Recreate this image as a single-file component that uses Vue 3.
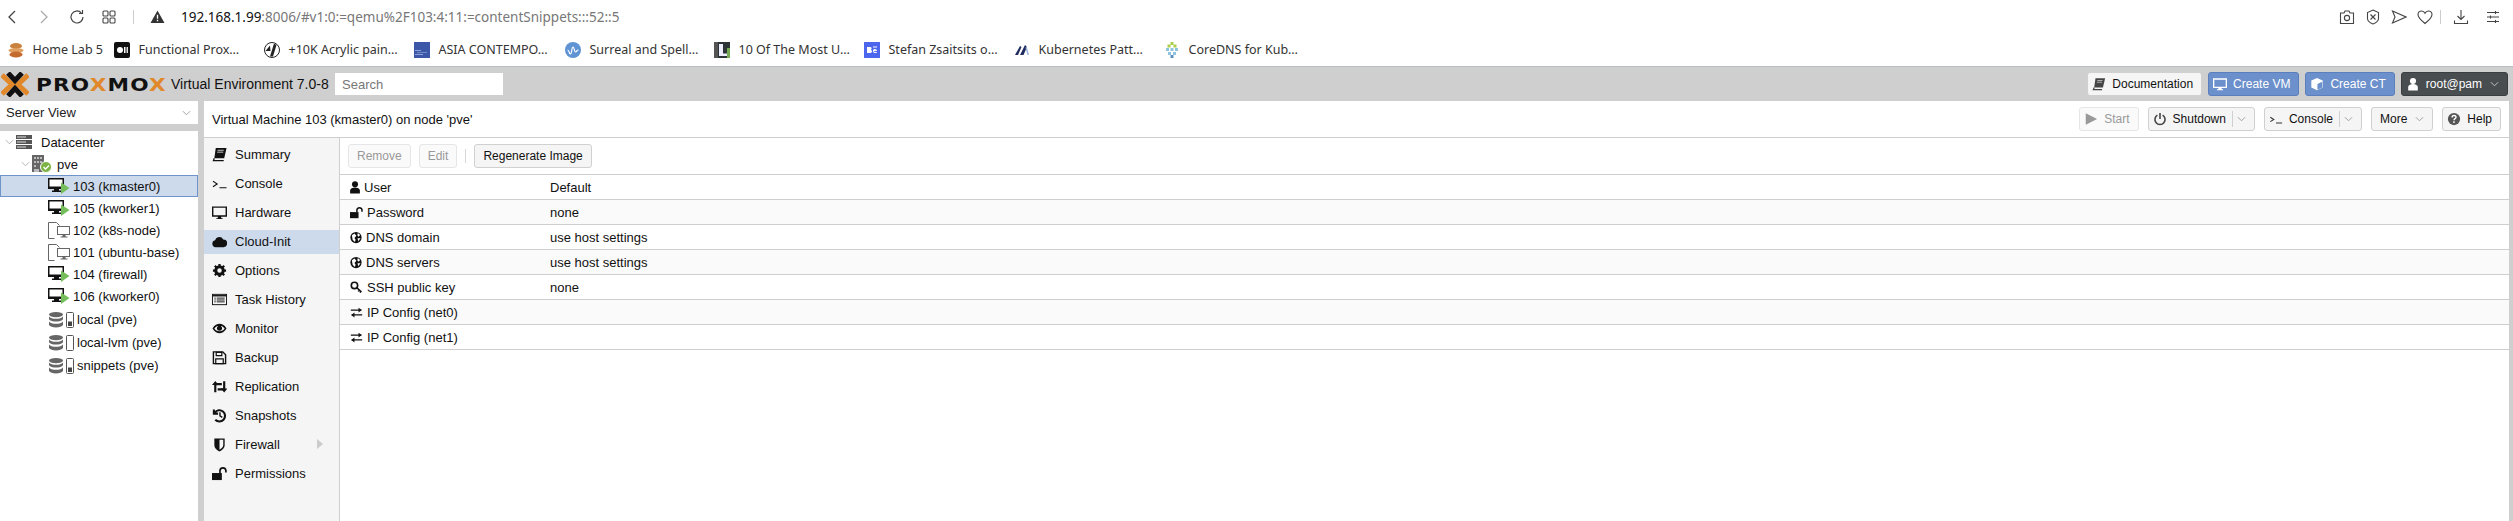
<template>
  <div class="page">
    <div class="browser-bar">
      <div class="nav-icons">
        <svg class="chrome-ico" viewBox="0 0 16 16"><path d="M11 2 5 8l6 6" fill="none" stroke="#444" stroke-width="1.300" /></svg>
        <svg class="chrome-ico" viewBox="0 0 16 16"><path d="m5 2 6 6-6 6" fill="none" stroke="#aaa" stroke-width="1.300" /></svg>
        <svg class="chrome-ico" viewBox="0 0 16 16"><path d="M14 8a6 6 0 1 1-1.800-4.300M13.500 1v3.500H10" fill="none" stroke="#444" stroke-width="1.200" /></svg>
        <svg class="chrome-ico" viewBox="0 0 16 16"><g fill="none" stroke="#444" stroke-width="1.100"><rect x="2" y="2" width="5" height="5" rx="1" /><rect x="9" y="2" width="5" height="5" rx="1" /><rect x="2" y="9" width="5" height="5" rx="1" /><rect x="9" y="9" width="5" height="5" rx="1" /></g></svg>
        <span class="bar-sep"></span>
        <svg class="warn-ico" viewBox="0 0 16 16"><path d="M8 1.500 15.500 15H.5Z" fill="#333" /><path d="M8 6v4.500M8 11.500v1.500" stroke="#fff" stroke-width="1.400" /></svg>
      </div>
      <div class="address"><b>192.168.1.99</b>:8006/#v1:0:=qemu%2F103:4:11:=contentSnippets:::52::5</div>
      <div class="right-icons">
        <svg class="chrome-ico" viewBox="0 0 16 16"><g fill="none" stroke="#444" stroke-width="1.100"><path d="M1.500 4h3.500l1-2h4l1 2h3.500v10.500h-13Z" /><circle cx="8" cy="9" r="2.600" /></g></svg>
        <svg class="chrome-ico" viewBox="0 0 16 16"><g fill="none" stroke="#444" stroke-width="1.100"><path d="M8 1 13.500 3.500v6c0 2.500-3 4.500-5.500 5.500-2.500-1-5.500-3-5.500-5.500v-6Z" /><path d="m5.500 5.500 5 5M10.500 5.500l-5 5" /></g></svg>
        <svg class="chrome-ico" viewBox="0 0 16 16"><path d="M1.500 2 15 8 1.500 14 4 8Z" fill="none" stroke="#444" stroke-width="1.100" /></svg>
        <svg class="chrome-ico" viewBox="0 0 16 16"><path d="M8 14.500C3 10.500 1 7.800 1 5.500 1 3.500 2.700 2 4.600 2c1.400 0 2.700.8 3.400 2.200C8.700 2.800 10 2 11.400 2 13.300 2 15 3.500 15 5.500c0 2.300-2 5-7 9Z" fill="none" stroke="#444" stroke-width="1.100" /></svg>
        <span class="bar-sep"></span>
        <svg class="chrome-ico dl" viewBox="0 0 16 16"><path d="M8 1v9.500M4.500 7 8 10.500 11.500 7M1.500 11.500v3h13v-3" fill="none" stroke="#444" stroke-width="1.100" /></svg>
        <svg class="chrome-ico sl" viewBox="0 0 16 16"><path d="M2 3.500h12M2 8h12M2 12.500h12M10.500 2v3M5.500 6.500v3M10.500 11v3" fill="none" stroke="#444" stroke-width="1.100" /></svg>
      </div>
    </div>

    <div class="bookmarks">
      <div v-for="b in bookmarks" :key="b.label" class="bookmark" :style="{ width: b.width + 'px' }">
        <svg class="fav" viewBox="0 0 16 16" v-html="b.icon"></svg>
        <span>{{ b.label }}</span>
      </div>
    </div>

    <header class="pve-header">
      <div class="logo">
        <svg class="logo-x" viewBox="0 0 28 25">
          <path d="M1 3l10 9.500L1 22M27 3 17 12.500 27 22" fill="none" stroke="#e0882a" stroke-width="5" />
          <path d="M7 1l7 7.500L21 1M7 24l7-7.500 7 7.500" fill="none" stroke="#111" stroke-width="5" />
        </svg>
        <span class="logo-word">PRO<i>X</i>MO<i>X</i></span>
      </div>
      <span class="version">Virtual Environment 7.0-8</span>
      <input class="search" placeholder="Search" />
      <div class="header-actions">
        <button class="btn">
          <svg class="ico" viewBox="0 0 16 16"><path d="M4 1.500h11L12.500 12H2.500Z" fill="#444" /><path d="M2.500 12 1.500 14.500h10" fill="none" stroke="#444" stroke-width="1.300" /><path d="M6 4h6M5.500 6h6" stroke="#ddd" stroke-width=".8" /></svg>
          Documentation
        </button>
        <button class="btn blue">
          <svg class="ico" viewBox="0 0 16 16"><path d="M0 1.500h16v11H9.800v1.500H11.500v1h-7v-1h1.700v-1.500H0Zm1.500 1.500v8h13V3Z" fill="#fff" /></svg>
          Create VM
        </button>
        <button class="btn blue">
          <svg class="ico" viewBox="0 0 16 16"><path d="M8 1 14.500 4v8L8 15 1.500 12V4Z" fill="#fff" /><path d="M8.500 8v6.500L14 12V5.500Z" fill="#6c90cb" /></svg>
          Create CT
        </button>
        <button class="btn dark">
          <svg class="ico" viewBox="0 0 16 16"><circle cx="8" cy="4.500" r="3.500" fill="#fff" /><path d="M2.500 15.500v-4C2.500 9.500 5 8 8 8s5.500 1.500 5.500 3.500v4Z" fill="#fff" /></svg>
          root@pam
          <svg class="caret" viewBox="0 0 10 6"><path d="m1 1 4 4 4-4" fill="none" stroke="#ccc" /></svg>
        </button>
      </div>
    </header>

    <div class="workspace">
      <aside class="left">
        <div class="view-select">
          <span>Server View</span>
          <svg class="caret" viewBox="0 0 10 6"><path d="m1 1 4 4 4-4" fill="none" stroke="#999" /></svg>
        </div>
        <div class="tree">
          <div v-for="n in tree" :key="n.label" class="tree-row" :class="[n.kind, { selected: n.selected }]">
            <svg v-if="n.twisty" class="twisty" viewBox="0 0 10 6"><path d="m1 1 4 4 4-4" fill="none" stroke="#aaa" /></svg>

            <svg v-if="n.kind === 'dc'" class="tree-ico" viewBox="0 0 16 14">
              <g fill="#555"><rect x="0" y="0" width="16" height="4" /><rect x="0" y="5" width="16" height="4" /><rect x="0" y="10" width="16" height="4" /></g>
              <g fill="#ddd"><rect x="1" y="1.500" width="9" height="1" /><rect x="1" y="6.500" width="9" height="1" /><rect x="1" y="11.500" width="9" height="1" /></g>
            </svg>
            <svg v-else-if="n.kind === 'node'" class="tree-ico node-ico" viewBox="0 0 20 18">
              <path d="M0 0h12v17H0Z" fill="#666" />
              <g fill="#bbb"><rect x="2" y="2" width="2" height="2" /><rect x="5" y="2" width="2" height="2" /><rect x="8" y="2" width="2" height="2" /><rect x="2" y="6" width="2" height="2" /><rect x="5" y="6" width="2" height="2" /><rect x="8" y="6" width="2" height="2" /><rect x="2" y="10" width="2" height="2" /><rect x="2" y="14" width="5" height="3" /></g>
              <circle cx="14" cy="12" r="5.500" fill="#7cb342" stroke="#fff" />
              <path d="m11.500 12 2 2 3.500-3.500" fill="none" stroke="#fff" stroke-width="1.300" />
            </svg>
            <svg v-else-if="n.kind === 'vm'" class="tree-ico vm-ico" viewBox="0 0 22 17">
              <path d="M0 0h16v11h-5v1.500h2V14H4v-1.500h2V11H0Z" fill="#111" />
              <rect x="1.500" y="1.500" width="13" height="7" fill="#fff" />
              <path d="M13 4.500 21.500 10 13 16Z" fill="#75bd5a" />
            </svg>
            <svg v-else-if="n.kind === 'tpl'" class="tree-ico vm-ico" viewBox="0 0 22 17">
              <path d="M.5 16.500V.5h8l3 3M.5 16.500h6" fill="none" stroke="#555" stroke-width="0.900" />
              <path d="M9 4h13v9h-4.500v1.500h2v1h-7v-1h2V13H9Z" fill="#666" />
              <rect x="10" y="5" width="11" height="7" fill="#fff" />
            </svg>
            <svg v-else class="tree-ico store-ico" viewBox="0 0 25 16">
              <g fill="#666"><ellipse cx="7" cy="2.600" rx="7" ry="2.600" /><path d="M0 4.500c1 1.600 3.800 2.300 7 2.300s6-.7 7-2.300v2.800c-1 1.600-3.800 2.300-7 2.300S1 8.900 0 7.300Z" /><path d="M0 9.500c1 1.600 3.800 2.300 7 2.300s6-.7 7-2.300v3.500c-1 1.600-3.800 2.500-7 2.500S1 14.600 0 13Z" /></g>
              <rect x="17.500" y=".5" width="7" height="15" rx="1" fill="none" stroke="#555" />
              <rect v-if="n.filled" x="19" y="9.500" width="4" height="4.500" fill="#444" />
            </svg>
            <span>{{ n.label }}</span>
          </div>
        </div>
      </aside>

      <main class="content">
        <div class="title-bar">
          <span class="vm-title">Virtual Machine 103 (kmaster0) on node 'pve'</span>
          <div class="title-actions">
            <button class="btn off">
              <svg class="ico" viewBox="0 0 16 16"><path d="M2 1.500 15 8 2 14.500Z" fill="#999" /></svg>
              Start
            </button>
            <button class="btn">
              <svg class="ico" viewBox="0 0 16 16"><path d="M5 3.500a5.800 5.800 0 1 0 6 0M8 1v7" fill="none" stroke="#444" stroke-width="1.800" /></svg>
              Shutdown<span class="split"></span>
              <svg class="caret" viewBox="0 0 10 6"><path d="m1 1 4 4 4-4" fill="none" stroke="#999" /></svg>
            </button>
            <button class="btn">
              <svg class="ico" viewBox="0 0 16 16"><path d="m1.500 6 4 2.500-4 2.500M8 12.500h7" fill="none" stroke="#333" stroke-width="1.200" /></svg>
              Console<span class="split"></span>
              <svg class="caret" viewBox="0 0 10 6"><path d="m1 1 4 4 4-4" fill="none" stroke="#999" /></svg>
            </button>
            <button class="btn more">
              More
              <svg class="caret" viewBox="0 0 10 6"><path d="m1 1 4 4 4-4" fill="none" stroke="#999" /></svg>
            </button>
            <button class="btn">
              <svg class="ico" viewBox="0 0 16 16"><circle cx="8" cy="8" r="7" fill="#555" /><path d="M5.800 6.200c0-3 4.500-3 4.500-.2 0 1.700-2.300 1.600-2.300 3.400M8 10.500v2" fill="none" stroke="#fff" stroke-width="1.600" /></svg>
              Help
            </button>
          </div>
        </div>

        <div class="panel">
          <nav class="side-nav">
            <div v-for="item in navItems" :key="item.label" class="nav-item" :class="{ active: item.active }">
              <svg class="nav-ico" viewBox="0 0 16 16" v-html="item.icon"></svg>
              <span>{{ item.label }}</span>
              <svg v-if="item.more" class="nav-more" viewBox="0 0 6 10"><path d="M0 0 6 5 0 10Z" fill="#ccc" /></svg>
            </div>
          </nav>

          <section class="grid-area">
            <div class="toolbar">
              <button class="btn plain off">Remove</button>
              <button class="btn plain off">Edit</button>
              <span class="tool-sep"></span>
              <button class="btn plain">Regenerate Image</button>
            </div>
            <div class="rows">
              <div v-for="(row, i) in rows" :key="row.label" class="row" :class="{ alt: i % 2 === 1 }">
                <div class="row-key">
                  <svg class="row-ico" :style="{ width: row.w + 'px' }" :viewBox="row.vb" v-html="row.icon"></svg>
                  <span>{{ row.label }}</span>
                </div>
                <div class="row-val">{{ row.value }}</div>
              </div>
            </div>
          </section>
        </div>
      </main>
    </div>
  </div>
</template>

<script setup>
const bookmarks = [
  { label: 'Home Lab 5', width: 106, icon: '<ellipse cx="8" cy="4" rx="6" ry="3" fill="#c9833f"/><ellipse cx="8" cy="8.500" rx="7.500" ry="2.500" fill="#e0a060"/><ellipse cx="8" cy="12.500" rx="6.500" ry="3" fill="#c46a2c"/>' },
  { label: 'Functional Prox…', width: 150, icon: '<rect width="16" height="16" rx="2" fill="#111"/><circle cx="6" cy="8" r="3" fill="#fff"/><rect x="10" y="5" width="1.500" height="6" fill="#fff"/><rect x="12.500" y="5" width="1.500" height="6" fill="#ddd"/>' },
  { label: '+10K Acrylic pain…', width: 150, icon: '<circle cx="8" cy="8" r="7.500" fill="#fff" stroke="#222"/><path d="M10 1.500 6 14.500h3L12.500 3Z" fill="#222"/><path d="M1.500 9 6 3.500 6.500 9Z" fill="#222"/>' },
  { label: 'ASIA CONTEMPO…', width: 151, icon: '<rect width="16" height="16" fill="#3d57a8"/><rect x="1" y="8" width="6" height="1" fill="#8ea3d8"/><rect x="3" y="10" width="10" height="1" fill="#7088c4"/><rect x="1" y="12" width="8" height="1" fill="#8ea3d8"/>' },
  { label: 'Surreal and Spell…', width: 149, icon: '<circle cx="8" cy="8" r="8" fill="#5f93d3"/><path d="M2.500 8c2 0 1.500 4 3 4s1-7 2.500-7 1 5 2.500 5 .8-2 3-2" fill="none" stroke="#fff" stroke-width="1.200"/>' },
  { label: '10 Of The Most U…', width: 150, icon: '<rect width="16" height="16" fill="#2c3438"/><path d="M0 0h4v16H0Z" fill="#555"/><path d="M5 2h4v9.500h4V14H5Z" fill="#eef"/><path d="M13 6h3v10h-3Z" fill="#7a5"/>' },
  { label: 'Stefan Zsaitsits o…', width: 150, icon: '<rect width="16" height="16" fill="#4c66ee"/><path d="M3 5h3.500c1.500 0 1.500 2.500.2 2.800 1.800.3 1.600 3.200-.2 3.200H3ZM9 4.500h4v1H9ZM9 8.500c0-2.200 4-2.200 4 .5H10c0 1.300 2 1.300 2.800.7l.2.800C11 11.800 9 11 9 8.500Z" fill="#fff"/>' },
  { label: 'Kubernetes Patt…', width: 150, icon: '<path d="M1 13 6 4l1.500 1L4 13ZM6 13l5-10 2 2-3.500 8Z" fill="#1f2b5c"/><path d="M12.500 4 15 13h-1.500L11.500 6Z" fill="#9bb7dd"/>' },
  { label: 'CoreDNS for Kub…', width: 130, icon: '<g fill="#a9cf4a"><rect x="6.500" y="0" width="3" height="3"/><rect x="3.500" y="2.500" width="3" height="3"/><rect x="9.500" y="2.500" width="3" height="3"/></g><g fill="#8fc4e0"><rect x="2" y="6" width="3" height="3"/><rect x="6.500" y="6" width="3" height="3"/><rect x="11" y="6" width="3" height="3"/><rect x="4" y="10" width="3" height="3"/><rect x="9" y="10" width="3" height="3"/></g><rect x="6.500" y="13" width="3" height="3" fill="#5b8fc0"/>' },
]

const tree = [
  { label: 'Datacenter', kind: 'dc', twisty: true },
  { label: 'pve', kind: 'node', twisty: true },
  { label: '103 (kmaster0)', kind: 'vm', selected: true },
  { label: '105 (kworker1)', kind: 'vm' },
  { label: '102 (k8s-node)', kind: 'tpl' },
  { label: '101 (ubuntu-base)', kind: 'tpl' },
  { label: '104 (firewall)', kind: 'vm' },
  { label: '106 (kworker0)', kind: 'vm' },
  { label: 'local (pve)', kind: 'store', filled: true },
  { label: 'local-lvm (pve)', kind: 'store' },
  { label: 'snippets (pve)', kind: 'store', filled: true },
]

const userIcon = '<circle cx="8" cy="4" r="3.700" fill="#111"/><path d="M2 15.500v-4C2 9.500 5 8 8 8s6 1.500 6 3.500v4Z" fill="#111"/>'
const lockIcon = '<rect x="0" y="7.500" width="10.500" height="7.500" fill="#111"/><path d="M8.500 7.500V4.700a3.200 3.200 0 0 1 6.300 0V7" fill="none" stroke="#111" stroke-width="1.800"/>'
const globeIcon = '<circle cx="8" cy="8" r="7.500" fill="#111"/><path d="M2.500 5 6 2.500 8.500 5.500 6 8.500 7.500 11 6.500 14 3.500 11Zm8-3 3 2.500-2 2.500-1.800-2ZM10 9h4l-3 4Z" fill="#fff"/>'
const keyIcon = '<circle cx="5.500" cy="5.500" r="3.900" fill="none" stroke="#111" stroke-width="2"/><path d="m8.200 8.200 6 5.300M11.500 11 10 12.800M13.500 12.800 12.300 14.300" fill="none" stroke="#111" stroke-width="1.800"/>'
const swapIcon = '<path d="M1 5h13M15 11H2" fill="none" stroke="#111" stroke-width="1.500"/><path d="M10.500 2v6L14.500 5ZM5.500 8v6L1.500 11Z" fill="#111"/>'

const rows = [
  { label: 'User', value: 'Default', icon: userIcon, vb: '2 0 12 16', w: 10 },
  { label: 'Password', value: 'none', icon: lockIcon, vb: '0 0 16 16', w: 13 },
  { label: 'DNS domain', value: 'use host settings', icon: globeIcon, vb: '0 0 16 16', w: 12 },
  { label: 'DNS servers', value: 'use host settings', icon: globeIcon, vb: '0 0 16 16', w: 12 },
  { label: 'SSH public key', value: 'none', icon: keyIcon, vb: '0 0 16 16', w: 13 },
  { label: 'IP Config (net0)', value: '', icon: swapIcon, vb: '0 0 16 16', w: 13 },
  { label: 'IP Config (net1)', value: '', icon: swapIcon, vb: '0 0 16 16', w: 13 },
]

const navItems = [
  { label: 'Summary', icon: '<path d="M4 1h11.500L13 12H2.500Z" fill="#111"/><path d="M2.500 12 1.500 14.500h11" fill="none" stroke="#111" stroke-width="1.300"/><path d="M6 3.500h6.500M5.500 5.500h6.500" stroke="#fff" stroke-width=".8"/>' },
  { label: 'Console', icon: '<path d="m1 5.500 4.500 3L1 11.500M8 12.500h7.500" fill="none" stroke="#111" stroke-width="1.200"/>' },
  { label: 'Hardware', icon: '<path d="M0 1.500h16v11H9.800v1.500h1.700v1h-7v-1h1.700v-1.500H0Zm1.500 1.500v8h13V3Z" fill="#111"/>' },
  { label: 'Cloud-Init', active: true, icon: '<path d="M3.800 14a3.700 3.700 0 0 1-.6-7.300A4.800 4.800 0 0 1 12 5.800a4.100 4.100 0 0 1 .2 8.200Z" fill="#111"/>' },
  { label: 'Options', icon: '<circle cx="8" cy="8" r="4" fill="none" stroke="#111" stroke-width="3.200"/><path d="M8 1v3M8 12v3M1 8h3M12 8h3M3 3l2 2M11 11l2 2M13 3l-2 2M5 11l-2 2" stroke="#111" stroke-width="2.400"/>' },
  { label: 'Task History', icon: '<rect x="0" y="2" width="16" height="12" fill="#111"/><rect x="1" y="3" width="14" height="10" fill="#f5f5f5"/><path d="M1 4h14" stroke="#111" stroke-width="1.500"/><path d="M2.500 6.500h1.500M5 6.500h8.500M2.500 8.500h1.500M5 8.500h8.500M2.500 10.500h1.500M5 10.500h8.500" stroke="#111"/>' },
  { label: 'Monitor', icon: '<path d="M.5 8C3 4 5.500 3 8 3s5 1 7.500 5c-2.500 4-5 5-7.500 5S3 12 .5 8Z" fill="#111"/><path d="M2.500 8C4 6 5 5.500 6 5.200a3.300 3.300 0 0 0 4 0C11 5.500 12 6 13.500 8 12 10 11 10.800 8 10.800S4 10 2.500 8Z" fill="#f5f5f5"/><circle cx="8" cy="7.800" r="2.700" fill="#111"/>' },
  { label: 'Backup', icon: '<path d="M1.500 2h10l3 3v9.500h-13Z" fill="none" stroke="#111" stroke-width="1.500"/><path d="M4.500 2.500h6v3.500h-6ZM4 9.500h8v5H4Z" fill="none" stroke="#111" stroke-width="1.300"/>' },
  { label: 'Replication', icon: '<path d="M3.500 14V5.500h7M13 2.500v8.500H6" fill="none" stroke="#111" stroke-width="2.300"/><path d="M0 6.500 3.500 2 7 6.500ZM9.500 10 13 14.500 16.500 10Z" fill="#111"/>' },
  { label: 'Snapshots', icon: '<path d="M3 5A6 6 0 1 1 3.500 12.500M2 1.500V6h4.500" fill="none" stroke="#111" stroke-width="2.200"/><path d="M8.500 4.500V8.500l2.500 1.500" fill="none" stroke="#111" stroke-width="1.500"/>' },
  { label: 'Firewall', more: true, icon: '<path d="M2.500 1.500h11v7c0 3.500-3 5.500-5.500 7-2.500-1.500-5.500-3.500-5.500-7Z" fill="#111"/><path d="M8 3h4v5.500c0 2.500-2 3.800-4 5Z" fill="#f5f5f5"/>' },
  { label: 'Permissions', icon: lockIcon },
]
</script>

<style>
html,
body {
  margin: 0;
  background: #fff;
}
</style>

<style scoped>
.page {
  width: 2513px;
  height: 521px;
  overflow: hidden;
  display: flex;
  flex-direction: column;
  font-family: "Liberation Sans", Arial, sans-serif;
  font-size: 13px;
  color: #111;
}

.browser-bar {
  height: 33px;
  flex: none;
  display: flex;
  align-items: center;
}

.nav-icons {
  display: flex;
  align-items: center;
  gap: 16.300px;
  margin-left: 4px;
  width: 177px;
  flex: none;
}

.chrome-ico {
  width: 16px;
  height: 16px;
  flex: none;
}

.warn-ico {
  width: 15px;
  height: 15px;
  flex: none;
}

.bar-sep {
  width: 1px;
  height: 14px;
  background: #ccc;
  flex: none;
}

.address {
  font-family: "Noto Sans", sans-serif;
  font-size: 13.500px;
  color: #777;
  white-space: nowrap;
}

.address b {
  font-weight: 400;
  color: #111;
}

.right-icons {
  margin-left: auto;
  margin-right: 12px;
  display: flex;
  align-items: center;
  gap: 10px;
}

.right-icons .bar-sep {
  margin-left: -3px;
}

.right-icons .dl {
  margin-left: 2px;
}

.right-icons .sl {
  margin-left: 6px;
}

.bookmarks {
  height: 33px;
  flex: none;
  display: flex;
  align-items: center;
  padding-left: 7.500px;
  font-family: "Noto Sans", sans-serif;
  font-size: 12.500px;
  color: #333;
}

.bookmark {
  display: flex;
  align-items: center;
  gap: 9px;
  white-space: nowrap;
  flex: none;
}

.fav {
  width: 16px;
  height: 16px;
  flex: none;
}

.pve-header {
  height: 35px;
  flex: none;
  background: #cfcfcf;
  border-top: 1px solid #b8bec4;
  display: flex;
  align-items: center;
  box-sizing: border-box;
}

.logo {
  display: flex;
  align-items: center;
  width: 171px;
  flex: none;
  padding-left: 1px;
  box-sizing: border-box;
}

.logo-x {
  width: 28px;
  height: 25px;
  flex: none;
}

.logo-word {
  font-family: "DejaVu Sans", sans-serif;
  font-weight: 700;
  font-size: 18px;
  letter-spacing: 1px;
  margin-left: 7px;
  color: #111;
  transform: scaleX(1.2);
  transform-origin: left center;
  white-space: nowrap;
}

.logo-word i {
  color: #e0882a;
  font-style: normal;
}

.version {
  font-size: 14px;
  width: 164px;
  white-space: nowrap;
  flex: none;
}

.search {
  width: 168px;
  height: 22px;
  box-sizing: border-box;
  border: none;
  padding: 0 7px;
  background: #fff;
  font: 13px "Liberation Sans", sans-serif;
}

.search::placeholder {
  color: #777;
}

.header-actions,
.title-actions {
  margin-left: auto;
  display: flex;
  align-items: center;
}

.header-actions {
  gap: 6px;
  padding-right: 5px;
}

.title-actions {
  gap: 9px;
  padding-right: 8px;
}

.btn {
  height: 24px;
  box-sizing: border-box;
  display: inline-flex;
  align-items: center;
  gap: 6px;
  padding: 0 8px 0 4px;
  border: 1px solid #d0d0d0;
  border-radius: 3px;
  background: #f5f5f5;
  font: 12px "Liberation Sans", sans-serif;
  color: #111;
  white-space: nowrap;
}

.btn.plain,
.btn.more {
  padding-left: 8px;
}

.btn.blue {
  background: #6c90cb;
  border-color: #5a7fbc;
  color: #fff;
}

.btn.dark {
  background: #484d50;
  border-color: #3a3e41;
  color: #fff;
}

.btn.off {
  color: #999;
  background: #fafafa;
  border-color: #e6e6e6;
}

.ico {
  width: 14px;
  height: 14px;
  flex: none;
}

.caret {
  width: 9px;
  height: 6px;
  flex: none;
  margin-left: 2px;
}

.split {
  width: 1px;
  height: 16px;
  background: #d0d0d0;
}

.split + .caret {
  margin-left: -2px;
}

.workspace {
  flex: 1;
  min-height: 0;
  display: flex;
  background: #cfcfcf;
  gap: 6px;
  padding-right: 4px;
}

.left {
  width: 198px;
  flex: none;
  display: flex;
  flex-direction: column;
  gap: 7px;
}

.view-select {
  height: 23px;
  flex: none;
  background: #fff;
  display: flex;
  align-items: center;
  justify-content: space-between;
  padding: 0 7px 0 6px;
  color: #222;
}

.tree {
  flex: 1;
  background: #fff;
}

.tree-row {
  height: 22px;
  display: flex;
  align-items: center;
  gap: 3px;
  padding-left: 48px;
  box-sizing: border-box;
  white-space: nowrap;
}

.tree-row.dc {
  padding-left: 5px;
  gap: 2px;
}

.tree-row.node {
  padding-left: 21px;
  gap: 2px;
}

.tree-row.store {
  height: 23px;
}

.tree-row:not(.store) + .store {
  margin-top: 1px;
}

.tree-row.selected {
  background: #ccdaec;
  border: 1px solid #6f94cc;
  padding-left: 47px;
}

.twisty {
  width: 9px;
  height: 6px;
  flex: none;
}

.tree-ico {
  width: 16px;
  height: 14px;
  flex: none;
}

.dc .tree-ico {
  margin-right: 7px;
}

.node-ico {
  width: 20px;
  height: 18px;
  margin-right: 3px;
}

.vm-ico {
  width: 22px;
  height: 17px;
}

.store-ico {
  width: 25px;
  height: 16px;
  margin-left: 1px;
}

.content {
  flex: 1;
  min-width: 0;
  display: flex;
  flex-direction: column;
  background: #fff;
}

.title-bar {
  height: 37px;
  flex: none;
  border-bottom: 1px solid #cfcfcf;
  box-sizing: border-box;
  display: flex;
  align-items: center;
  padding-left: 8px;
}

.panel {
  flex: 1;
  min-height: 0;
  display: flex;
}

.side-nav {
  width: 135px;
  flex: none;
  background: #f5f5f5;
  border-right: 1px solid #cfcfcf;
  padding-top: 2px;
}

.nav-item {
  height: 29px;
  display: flex;
  align-items: center;
  gap: 8px;
  padding-left: 8px;
  position: relative;
}

.nav-item.active {
  background: #ccdaec;
  height: 24px;
  margin: 2.500px 0;
}

.nav-ico {
  width: 15px;
  height: 15px;
  flex: none;
}

.nav-more {
  position: absolute;
  right: 16px;
  top: 9px;
  width: 6px;
  height: 10px;
}

.grid-area {
  flex: 1;
  min-width: 0;
}

.toolbar {
  height: 37px;
  box-sizing: border-box;
  display: flex;
  align-items: center;
  gap: 8px;
  padding-left: 8px;
  border-bottom: 1px solid #cfcfcf;
}

.tool-sep {
  width: 1px;
  height: 14px;
  background: #d8d8d8;
}

.row {
  height: 25px;
  box-sizing: border-box;
  border-bottom: 1px solid #cfcfcf;
  display: flex;
  align-items: center;
  background: #fff;
}

.row.alt {
  background: #fafafa;
}

.row-key {
  width: 210px;
  flex: none;
  display: flex;
  align-items: center;
  gap: 4px;
  padding-left: 10px;
  box-sizing: border-box;
}

.row-ico {
  height: 13px;
  flex: none;
}
</style>
